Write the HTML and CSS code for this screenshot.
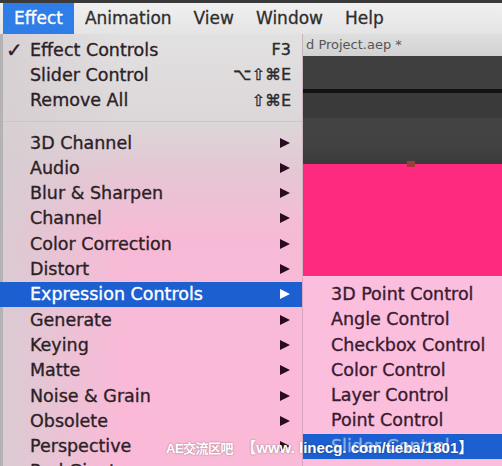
FILE: index.html
```html
<!DOCTYPE html>
<html lang="en">

<head>
  <meta charset="UTF-8">
  <title>Effect menu</title>
  <link rel="stylesheet" href="styles.css">
</head>

<body>
  <div class="screen">
    <!-- Menu bar -->
    <div class="menubar">
      <span class="menubar-item active">Effect</span>
      <span class="menubar-item">Animation</span>
      <span class="menubar-item">View</span>
      <span class="menubar-item">Window</span>
      <span class="menubar-item">Help</span>
    </div>

    <div class="stage">
      <!-- Effect dropdown -->
      <div class="dropdown">
        <div class="item"><span class="check">&#10003;</span><span class="label">Effect Controls</span><span class="key">F3</span></div>
        <div class="item"><span class="check"></span><span class="label">Slider Control</span><span class="key">&#8997;&#8679;&#8984;E</span></div>
        <div class="item"><span class="check"></span><span class="label">Remove All</span><span class="key">&#8679;&#8984;E</span></div>
        <div class="separator"></div>
        <div class="item"><span class="check"></span><span class="label">3D Channel</span><span class="arrow"></span></div>
        <div class="item"><span class="check"></span><span class="label">Audio</span><span class="arrow"></span></div>
        <div class="item"><span class="check"></span><span class="label">Blur &amp; Sharpen</span><span class="arrow"></span></div>
        <div class="item"><span class="check"></span><span class="label">Channel</span><span class="arrow"></span></div>
        <div class="item"><span class="check"></span><span class="label">Color Correction</span><span class="arrow"></span></div>
        <div class="item"><span class="check"></span><span class="label">Distort</span><span class="arrow"></span></div>
        <div class="item selected"><span class="check"></span><span class="label">Expression Controls</span><span class="arrow"></span></div>
        <div class="item"><span class="check"></span><span class="label">Generate</span><span class="arrow"></span></div>
        <div class="item"><span class="check"></span><span class="label">Keying</span><span class="arrow"></span></div>
        <div class="item"><span class="check"></span><span class="label">Matte</span><span class="arrow"></span></div>
        <div class="item"><span class="check"></span><span class="label">Noise &amp; Grain</span><span class="arrow"></span></div>
        <div class="item"><span class="check"></span><span class="label">Obsolete</span><span class="arrow"></span></div>
        <div class="item"><span class="check"></span><span class="label">Perspective</span><span class="arrow"></span></div>
        <div class="item"><span class="check"></span><span class="label">Red Giant</span><span class="arrow"></span></div>
      </div>

      <!-- Application window behind the menu -->
      <div class="workspace">
        <div class="titlebar">d Project.aep *</div>
        <div class="panel panel-top"></div>
        <div class="panel-line"></div>
        <div class="panel panel-mid"></div>
        <div class="panel panel-low"></div>
        <div class="composition"><span class="marker"></span></div>
      </div>

      <!-- Expression Controls submenu -->
      <div class="submenu">
        <div class="sub-item">3D Point Control</div>
        <div class="sub-item">Angle Control</div>
        <div class="sub-item">Checkbox Control</div>
        <div class="sub-item">Color Control</div>
        <div class="sub-item">Layer Control</div>
        <div class="sub-item">Point Control</div>
        <div class="sub-item selected">Slider Control</div>
      </div>
    </div>

    <div class="watermark"><span class="wm-cn">AE交流区吧</span> 【www. linecg. com/tieba/1801】</div>
  </div>
</body>

</html>
```

FILE: styles.css
```css
body {
  margin: 0;
  padding: 0;
  background-color: #ececec;
  font-family: "DejaVu Sans", "Liberation Sans", sans-serif;
  color: #2a2a2a;
}

.screen {
  position: relative;
  width: 502px;
  height: 466px;
  overflow: hidden;
}

/* Menu bar */
.menubar {
  height: 31px;
  border-top: 3px solid #3a3a3a;
  background: linear-gradient(#f0f0f0, #e4e4e4);
  display: flex;
  padding-left: 3px;
}

.menubar-item {
  font-size: 17px;
  line-height: 31px;
  padding: 0 11px;
  color: #2e2e2e;
  -webkit-text-stroke: 0.3px currentColor;
}

.menubar-item.active {
  background-color: #2f7de6;
  color: #fff;
}

.stage {
  position: relative;
  display: flex;
  height: 432px;
}

/* Dropdown */
.dropdown {
  width: 299px;
  flex-shrink: 0;
  padding-top: 3px;
  border-left: 3px solid #b4b2b3;
  border-right: 1px solid #c9b4bf;
  background:
    linear-gradient(to right, rgba(214, 206, 210, 0.85) 0, rgba(214, 206, 210, 0) 120px),
    linear-gradient(#e2e1e1 0, #dcd6d8 90px, #e6c6d4 140px, #f7bad6 200px, #fbb9d8 100%);
}

.item {
  display: flex;
  align-items: center;
  height: 25.3px;
  padding: 0 11px 0 3px;
  font-size: 17.5px;
  color: #2d1f27;
  -webkit-text-stroke: 0.35px currentColor;
  white-space: nowrap;
}

.check {
  width: 24px;
  font-size: 20px;
  font-weight: bold;
}

.label {
  flex: 1;
}

.key {
  font-size: 16px;
  color: #2a2a2a;
}

.arrow {
  width: 0;
  height: 0;
  margin-right: 1px;
  border-top: 5.5px solid transparent;
  border-bottom: 5.5px solid transparent;
  border-left: 10px solid #2a0c22;
}

.separator {
  height: 8px;
  border-bottom: 1px solid #c9c6c7;
  margin-bottom: 8px;
}

.item.selected {
  background-color: #1c5fd0;
  color: #fff;
  margin-left: -3px;
  padding-left: 6px;
  margin-right: -1px;
  padding-right: 12px;
}

.item.selected .arrow {
  border-left-color: #fff;
}

/* Workspace */
.workspace {
  flex: 1;
  display: flex;
  flex-direction: column;
}

.titlebar {
  height: 22px;
  background: linear-gradient(#dedede, #d2d2d2);
  font-size: 13px;
  line-height: 22px;
  color: #555;
  padding-left: 3px;
  white-space: nowrap;
}

.panel-top {
  height: 33px;
  background-color: #3f3f3f;
}

.panel-line {
  height: 4px;
  background-color: #121212;
}

.panel-mid {
  height: 25px;
  background-color: #3a3a3a;
}

.panel-low {
  height: 46px;
  background: linear-gradient(#444 0, #424242 60%, #3a3a3a 100%);
}

.composition {
  position: relative;
  flex: 1;
  background-color: #fe2a80;
}

.marker {
  position: absolute;
  left: 104px;
  top: -3px;
  width: 8px;
  height: 6px;
  background-color: #a33a3a;
}

/* Submenu */
.submenu {
  position: absolute;
  left: 302px;
  top: 242px;
  width: 200px;
  height: 200px;
  padding-top: 5px;
  background-color: #fbbedd;
  border-top: 1px solid #f6c9de;
  border-left: 1px solid #d9a4bf;
}

.sub-item {
  height: 25.3px;
  line-height: 25.3px;
  padding-left: 28px;
  font-size: 17.5px;
  color: #3a1a30;
  white-space: nowrap;
  -webkit-text-stroke: 0.35px currentColor;
}

.sub-item.selected {
  background-color: #1c5fd0;
  color: #8fb0e8;
}

/* Watermark */
.watermark {
  position: absolute;
  left: 166px;
  top: 436px;
  font-family: "Liberation Sans", "Noto Sans CJK SC", sans-serif;
  font-size: 15px;
  font-weight: bold;
  color: #fff;
  text-shadow: 0 0 2px rgba(0, 0, 0, 0.4);
  white-space: nowrap;
}

.wm-cn {
  font-size: 13px;
  letter-spacing: -0.5px;
  margin-right: 4px;
}
```
